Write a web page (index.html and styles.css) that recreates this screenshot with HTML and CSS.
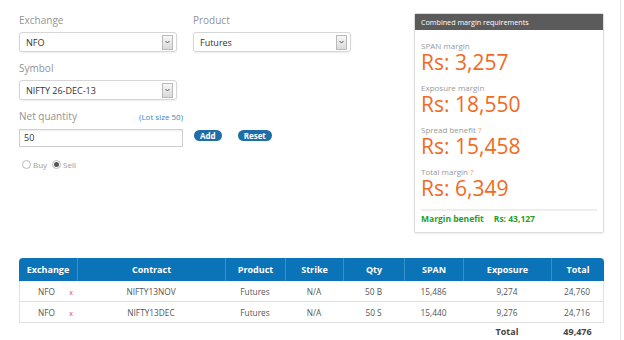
FILE: index.html
```html
<!DOCTYPE html>
<html lang="en">
<head>
    <meta charset="UTF-8">
    <meta name="viewport" content="width=device-width, initial-scale=1.0">
    <title>Margin Calculator</title>
    <link rel="stylesheet" href="styles.css">
</head>
<body>

    <div class="page">
        <div class="top">
            <!-- Order form -->
            <div class="form">
                <div class="row">
                    <div class="field">
                        <label>Exchange</label>
                        <div class="select"><span>NFO</span><i class="arrow"><svg width="5" height="4" viewBox="0 0 5 4"><path d="M0.5 1 L2.5 3 L4.5 1" fill="none" stroke="#555" stroke-width="1"/></svg></i></div>
                    </div>
                    <div class="field">
                        <label>Product</label>
                        <div class="select"><span>Futures</span><i class="arrow"><svg width="5" height="4" viewBox="0 0 5 4"><path d="M0.5 1 L2.5 3 L4.5 1" fill="none" stroke="#555" stroke-width="1"/></svg></i></div>
                    </div>
                </div>
                <div class="row">
                    <div class="field">
                        <label>Symbol</label>
                        <div class="select"><span>NIFTY 26-DEC-13</span><i class="arrow"><svg width="5" height="4" viewBox="0 0 5 4"><path d="M0.5 1 L2.5 3 L4.5 1" fill="none" stroke="#555" stroke-width="1"/></svg></i></div>
                    </div>
                </div>
                <div class="qty-row">
                    <div class="field qty">
                        <div class="qty-label">
                            <label>Net quantity</label>
                            <a class="lot">(Lot size 50)</a>
                        </div>
                        <div class="input">50</div>
                    </div>
                    <div class="buttons">
                        <button class="btn">Add</button>
                        <button class="btn">Reset</button>
                    </div>
                </div>
                <div class="radios">
                    <span class="radio"><i class="dot"></i>Buy</span>
                    <span class="radio"><i class="dot on"></i>Sell</span>
                </div>
            </div>

            <!-- Margin summary -->
            <div class="panel">
                <div class="panel-head">Combined margin requirements</div>
                <div class="panel-body">
                    <div class="item">
                        <div class="item-label">SPAN margin</div>
                        <div class="amount">Rs: 3,257</div>
                    </div>
                    <div class="item">
                        <div class="item-label">Exposure margin</div>
                        <div class="amount">Rs: 18,550</div>
                    </div>
                    <div class="item">
                        <div class="item-label">Spread benefit <span class="q">?</span></div>
                        <div class="amount">Rs: 15,458</div>
                    </div>
                    <div class="item">
                        <div class="item-label">Total margin <span class="q">?</span></div>
                        <div class="amount">Rs: 6,349</div>
                    </div>
                    <div class="benefit">
                        <span>Margin benefit</span>
                        <span>Rs: 43,127</span>
                    </div>
                </div>
            </div>
        </div>

        <!-- Positions -->
        <table class="positions">
            <thead>
                <tr>
                    <th class="c-exch">Exchange</th>
                    <th class="c-contract">Contract</th>
                    <th class="c-product">Product</th>
                    <th class="c-strike">Strike</th>
                    <th class="c-qty">Qty</th>
                    <th class="c-span">SPAN</th>
                    <th class="c-exp">Exposure</th>
                    <th class="c-total">Total</th>
                </tr>
            </thead>
            <tbody>
                <tr>
                    <td class="exch">NFO <span class="del">x</span></td>
                    <td>NIFTY13NOV</td>
                    <td>Futures</td>
                    <td>N/A</td>
                    <td>50 B</td>
                    <td>15,486</td>
                    <td>9,274</td>
                    <td>24,760</td>
                </tr>
                <tr>
                    <td class="exch">NFO <span class="del">x</span></td>
                    <td>NIFTY13DEC</td>
                    <td>Futures</td>
                    <td>N/A</td>
                    <td>50 S</td>
                    <td>15,440</td>
                    <td>9,276</td>
                    <td>24,716</td>
                </tr>
                <tr class="sum">
                    <td colspan="6"></td>
                    <td>Total</td>
                    <td>49,476</td>
                </tr>
            </tbody>
        </table>
    </div>

</body>
</html>
```

FILE: styles.css
```css
body {
    margin: 0;
    padding: 0;
    background-color: #fff;
    font-family: "Open Sans", Arial, sans-serif;
    color: #444;
}
.page {
    width: 621px;
    height: 340px;
    border-right: 1px solid #e3e3e3;
    padding: 13px 0 0 19px;
    box-sizing: border-box;
    overflow: hidden;
}
.top {
    display: flex;
    align-items: flex-start;
}
.form {
    width: 395px;
}
.row {
    display: flex;
    gap: 16px;
    margin-bottom: 9px;
}
.field {
    width: 158px;
}
label {
    display: block;
    font-size: 10px;
    color: #939393;
    line-height: 14px;
}
.select {
    height: 20px;
    margin-top: 5px;
    box-sizing: border-box;
    border: 1px solid #d6d6d6;
    border-radius: 3px;
    box-shadow: 0 1px 2px rgba(0, 0, 0, 0.08);
    display: flex;
    align-items: center;
    justify-content: space-between;
    padding: 0 3px 0 6px;
    font-size: 9px;
    color: #333;
}
.arrow {
    width: 11px;
    height: 15px;
    box-sizing: border-box;
    border: 1px solid #b9b9b9;
    background: linear-gradient(#f6f6f6, #dadada);
    display: flex;
    align-items: center;
    justify-content: center;
}
.qty-row {
    display: flex;
    align-items: flex-end;
    margin-top: 1px;
}
.qty {
    width: 164px;
}
.qty-label {
    display: flex;
    justify-content: space-between;
    align-items: baseline;
}
.lot {
    font-size: 8px;
    color: #3a85c4;
}
.input {
    height: 18px;
    margin-top: 6px;
    box-sizing: border-box;
    border: 1px solid #cfcfcf;
    box-shadow: inset 0 1px 2px rgba(0, 0, 0, 0.08);
    font-size: 9px;
    color: #333;
    line-height: 16px;
    padding-left: 4px;
}
.buttons {
    display: flex;
    gap: 16px;
    margin-left: 11px;
    margin-bottom: 6px;
}
.btn {
    height: 11px;
    border: none;
    border-radius: 6px;
    background-color: #1f6ea8;
    color: #fff;
    font-family: "Open Sans", Arial, sans-serif;
    font-weight: bold;
    font-size: 8px;
    line-height: 11px;
    padding: 0 6px;
}
.radios {
    display: flex;
    gap: 5px;
    margin-top: 12px;
    margin-left: 3px;
    font-size: 8px;
    color: #999;
}
.radio {
    display: flex;
    align-items: center;
}
.dot {
    width: 9px;
    height: 9px;
    box-sizing: border-box;
    border: 1px solid #bbb;
    border-radius: 50%;
    margin-right: 2px;
    display: flex;
    align-items: center;
    justify-content: center;
}
.dot.on::after {
    content: "";
    width: 5px;
    height: 5px;
    border-radius: 50%;
    background-color: #555;
}
.panel {
    width: 190px;
    box-sizing: border-box;
    border: 1px solid #dcdcdc;
    border-radius: 2px;
    box-shadow: 0 1px 2px rgba(0, 0, 0, 0.08);
    height: 220px;
}
.panel-head {
    background-color: #5b5b5b;
    color: #fff;
    font-size: 7.2px;
    height: 16px;
    line-height: 16px;
    padding-left: 6px;
}
.panel-body {
    padding: 10px 6px 0 6px;
}
.item {
    height: 42px;
}
.item-label {
    font-size: 8px;
    color: #999;
    line-height: 12px;
}
.q {
    color: #f79a6f;
}
.amount {
    font-size: 21px;
    line-height: 20px;
    color: #f26a22;
}
.benefit {
    margin-top: 1px;
    border-top: 2px solid #eee;
    padding-top: 2px;
    font-size: 8.5px;
    line-height: 11px;
    font-weight: bold;
    color: #1fa02a;
    display: flex;
    gap: 10px;
}
.positions {
    margin-top: 25px;
    width: 585px;
    border-collapse: separate;
    border-spacing: 0;
    font-size: 8.3px;
    color: #555;
}
.positions th {
    background-color: #0b73b7;
    color: #fff;
    font-size: 9px;
    height: 23px;
    padding: 0;
    border-left: 1px solid #3a90c8;
}
.positions th:first-child {
    border-left: none;
    border-top-left-radius: 4px;
}
.positions th:last-child {
    border-top-right-radius: 4px;
}
.c-exch { width: 58px; }
.c-contract { width: 147px; }
.c-product { width: 59px; }
.c-strike { width: 57px; }
.c-qty { width: 60px; }
.c-span { width: 58px; }
.c-exp { width: 87px; }
.positions td {
    text-align: center;
    height: 20px;
    padding: 0;
    border-bottom: 1px solid #e2e2e2;
}
.positions td:first-child {
    border-left: 1px solid #e2e2e2;
}
.positions td:last-child {
    border-right: 1px solid #e2e2e2;
}
.positions .exch {
    text-align: left;
    padding-left: 18px;
}
.del {
    color: #e84c3d;
    font-size: 7px;
    margin-left: 12px;
}
.positions .sum td {
    border: none;
    font-weight: bold;
    color: #444;
    font-size: 9px;
    height: 16px;
}
```
